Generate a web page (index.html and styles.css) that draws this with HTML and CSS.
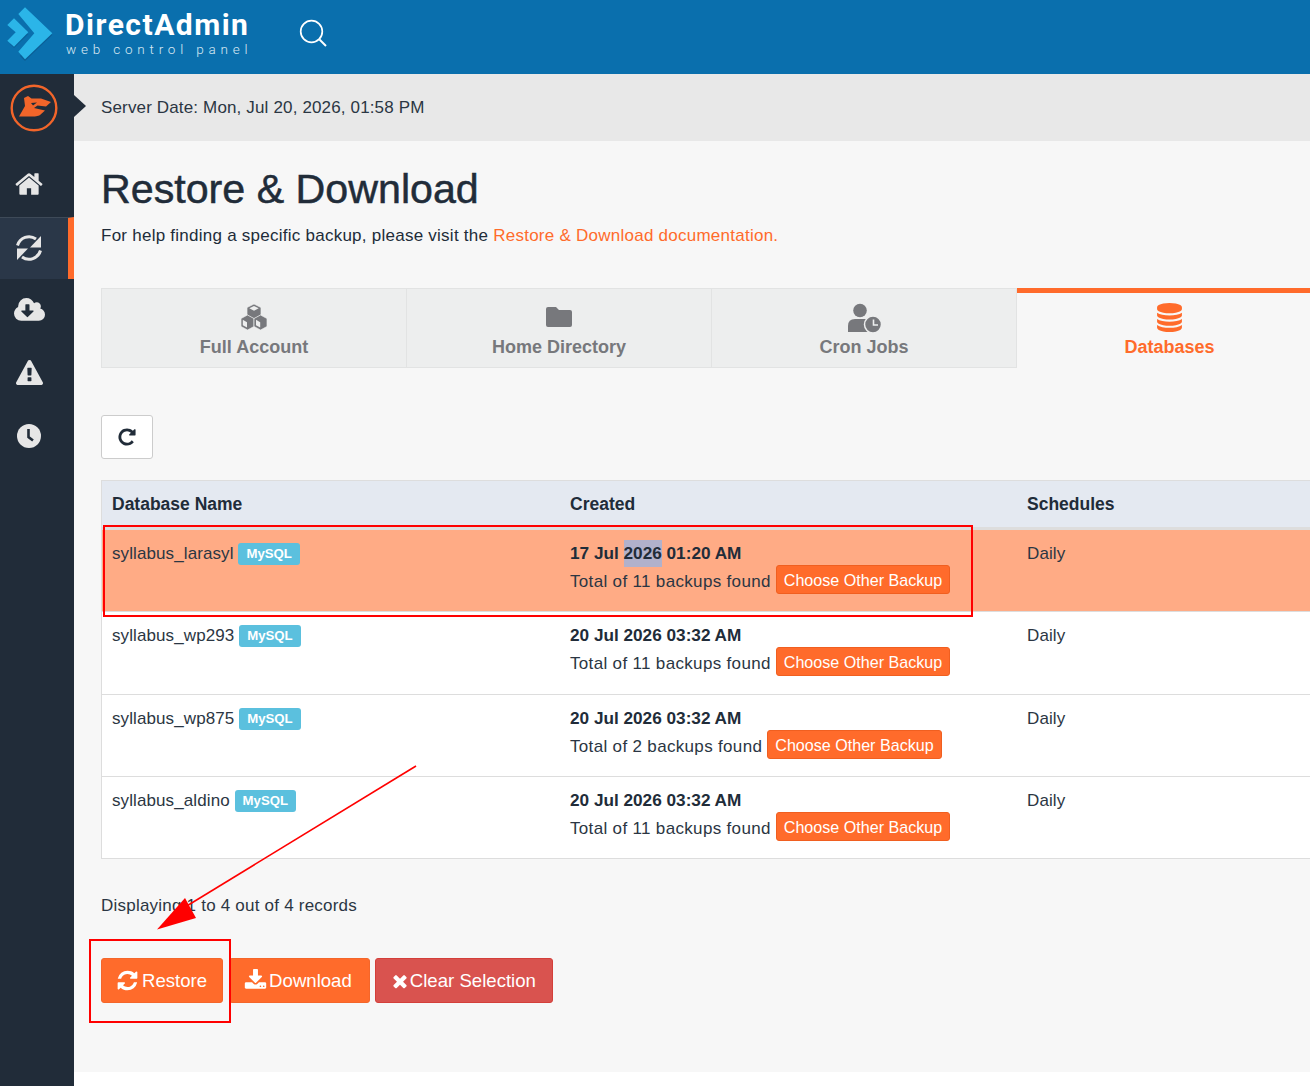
FILE: index.html
```html
<!DOCTYPE html>
<html lang="en">
<head>
<meta charset="utf-8">
<title>Restore &amp; Download</title>
<link rel="stylesheet" href="styles.css">
</head>
<body>
<div class="page">
  <header class="topbar">
    <svg class="da-mark" viewBox="0 0 54 62" aria-hidden="true">
      <path d="M25 9 L52.300 35 L25 61 L20 56 L38 35 L20 14Z" fill="#0a5f97"/>
      <path d="M25 7.300 L52.300 33.300 L25 59.300 L18.300 51.700 L34.300 33.300 L18.300 14Z" fill="#2bb5e8"/>
      <path d="M28.300 34 L14 48 L10 44 L18 34Z" fill="#0a5f97"/>
      <path d="M14 18.300 L28.300 32.300 L14 46.700 L7.300 40.700 L15.700 32.300 L7.300 25Z" fill="#2bb5e8"/>
    </svg>
    <div class="brand">
      <div class="brand-name">DirectAdmin</div>
      <div class="brand-sub">web control panel</div>
    </div>
    <svg class="search" viewBox="0 0 28 28" aria-hidden="true">
      <circle cx="12.500" cy="12.500" r="10.800" fill="none" stroke="#fff" stroke-width="1.700"/>
      <path d="M20.500 20.500 L27 27" stroke="#fff" stroke-width="1.900" fill="none"/>
    </svg>
  </header>

  <div class="body-row">
    <nav class="sidebar">
      <div class="mascot">
        <svg viewBox="0 0 60 60" class="mascot-svg" aria-hidden="true">
          <circle cx="30" cy="30" r="22.300" fill="none" stroke="#f2652a" stroke-width="2.400"/>
          <path d="M24 18 L27.500 20.500 H37 L47 24 L42 28.500 L33.500 27.500 L30 30 L41 32.500 L36 37 C33 39 28 38.500 15 38.500 L21 28 L20 20Z" fill="#f2652a"/>
          <path d="M27 25 L33 24.500 L29 27.500Z" fill="#212c39"/>
        </svg>
      </div>
      <a class="nav-item nav-home"><svg class="nav-icon icon-home" viewBox="0 0 1792 1792"><path d="M1472 992v480q0 26-19 45t-45 19h-384v-384h-256v384h-384q-26 0-45-19t-19-45v-480q0-1 .5-3t.5-3l575-474 575 474q1 2 1 6zm223-69l-62 74q-8 9-21 11h-3q-13 0-21-7l-692-577-692 577q-12 8-24 7-13-2-21-11l-62-74q-8-10-7-23.500t11-21.500l719-599q32-26 76-26t76 26l244 204v-195q0-14 9-23t23-9h192q14 0 23 9t9 23v408l219 182q10 8 11 21.500t-7 23.500z"/></svg></a>
      <a class="nav-item nav-active"><svg class="icon-sync" viewBox="0 0 40 40"><path d="M8.500 17.500 A12 12 0 0 1 27 11" fill="none" stroke="#e6e6e6" stroke-width="3"/><path d="M32 8 V19.500 H21Z" fill="#e6e6e6"/><path d="M31.500 22.500 A12 12 0 0 1 13 29" fill="none" stroke="#e6e6e6" stroke-width="3"/><path d="M8 32 V20.500 H19Z" fill="#e6e6e6"/></svg></a>
      <a class="nav-item"><svg class="nav-icon icon-cloud" viewBox="0 0 1920 1792"><path d="M1216 928q0-14-9-23t-23-9h-224v-352q0-13-9.500-22.500t-22.500-9.500h-192q-13 0-22.500 9.500t-9.500 22.500v352h-224q-13 0-22.500 9.500t-9.500 22.500q0 14 9 23l352 352q9 9 23 9t23-9l351-351q10-12 10-24zm704 224q0 159-112.500 271.500t-271.500 112.500h-1088q-185 0-316.500-131.500t-131.500-316.500q0-130 70-240t188-165q-2-30-2-43 0-212 150-362t362-150q156 0 285.500 87t188.500 231q71-62 166-62 106 0 181 75t75 181q0 76-41 138 130 31 213.500 135.500t83.500 238.500z"/></svg></a>
      <a class="nav-item nav-low"><svg class="nav-icon icon-warn" viewBox="0 0 1792 1792"><path d="M1024 1375v-190q0-14-9.500-23.500t-22.500-9.500h-192q-13 0-22.500 9.500t-9.500 23.500v190q0 14 9.500 23.500t22.500 9.500h192q13 0 22.500-9.500t9.500-23.500zm-2-374l18-459q0-12-10-19-13-11-24-11h-220q-11 0-24 11-10 7-10 21l17 457q0 10 10 16.500t24 6.500h185q14 0 23.500-6.500t10.500-16.500zm-14-934l768 1408q35 63-2 126-17 29-46.500 46t-63.500 17h-1536q-34 0-63.500-17t-46.500-46q-37-63-2-126l768-1408q17-31 47-49t65-18 65 18 47 49z"/></svg></a>
      <a class="nav-item nav-lower"><svg class="nav-icon icon-clock" viewBox="0 0 24 24"><circle cx="12" cy="12" r="12"/><path d="M11.500 5 V13 L16 16.500" fill="none" stroke="#212c39" stroke-width="2.600"/></svg></a>
    </nav>

    <main class="main">
      <div class="datebar">
        <svg class="datebar-tip" viewBox="0 0 12 22" aria-hidden="true"><path d="M0 0 L12 11 L0 22Z"/></svg>
        Server Date: Mon, Jul 20, 2026, 01:58 PM
      </div>
      <section class="content">
        <h1 class="title">Restore &amp; Download</h1>
        <p class="help">For help finding a specific backup, please visit the <a class="help-link">Restore &amp; Download documentation.</a></p>

        <div class="tabs">
          <div class="tab">
            <svg class="tab-icon" viewBox="0 0 28 26"><g fill="#77787c" stroke="#edeeee" stroke-width="0.700"><path d="M14 0 L21 3.500 V11 L14 15 L7 11 V3.500Z"/><path d="M7.500 11 L14 14.500 V22.500 L7.500 26 L1 22.500 V14.500Z"/><path d="M20.500 11 L27 14.500 V22.500 L20.500 26 L14 22.500 V14.500Z"/></g><g fill="#edeeee"><path d="M9.300 4.300 L14 6.800 L18.700 4.300 L14 2Z"/><path d="M2.800 15.800 L7 18.200 V23.500 L2.800 21.200Z"/><path d="M16 15.800 L20.200 18.200 V23.500 L16 21.200Z"/></g></svg>
            <span class="tab-label">Full Account</span>
          </div>
          <div class="tab">
            <svg class="tab-icon" viewBox="0 0 28 26"><path d="M3 3 H11 L14 6 H25 Q27 6 27 8 V21 Q27 23 25 23 H3 Q1 23 1 21 V5 Q1 3 3 3Z" fill="#77787c"/></svg>
            <span class="tab-label">Home Directory</span>
          </div>
          <div class="tab tab-third">
            <svg class="tab-icon tab-icon-user" viewBox="0 0 34 30"><circle cx="13" cy="7.500" r="6.800" fill="#77787c"/><path d="M1 29 V23 Q1 16 8 16 H18 Q24 16 25 20 V29Z" fill="#77787c"/><circle cx="26" cy="21.500" r="8.500" fill="#77787c" stroke="#edeeee" stroke-width="1.500"/><path d="M26.500 16.500 V22 H31" stroke="#edeeee" stroke-width="1.600" fill="none"/></svg>
            <span class="tab-label">Cron Jobs</span>
          </div>
          <div class="tab tab-active">
            <svg class="tab-icon tab-icon-db" viewBox="0 0 1536 1792"><path d="M768 768q237 0 443-43t325-127v170q0 69-103 128t-280 93.500-385 34.500-385-34.500-280-93.500-103-128v-170q119 84 325 127t443 43zm0 768q237 0 443-43t325-127v170q0 69-103 128t-280 93.500-385 34.500-385-34.500-280-93.500-103-128v-170q119 84 325 127t443 43zm0-384q237 0 443-43t325-127v170q0 69-103 128t-280 93.500-385 34.500-385-34.500-280-93.500-103-128v-170q119 84 325 127t443 43zm0-1152q208 0 385 34.500t280 93.500 103 128v128q0 69-103 128t-280 93.500-385 34.500-385-34.500-280-93.500-103-128v-128q0-69 103-128t280-93.500 385-34.500z" fill="#ff6b2b"/></svg>
            <span class="tab-label">Databases</span>
          </div>
        </div>

        <button class="refresh" type="button"><svg viewBox="0 0 1792 1792" class="refresh-icon"><path d="M1664 256v448q0 26-19 45t-45 19h-448q-42 0-59-40-17-39 14-69l138-138q-148-137-349-137-104 0-198.500 40.500t-163.500 109.500-109.500 163.500-40.500 198.500 40.500 198.500 109.500 163.500 163.500 109.500 198.500 40.500q119 0 225-52t179-147q7-10 23-12 15 0 25 9l137 138q9 8 9.500 20.500t-7.500 22.500q-109 132-264 204.500t-327 72.500q-156 0-298-61t-245-164-164-245-61-298 61-298 164-245 245-164 298-61q147 0 284.500 55.500t244.500 156.500l130-129q29-31 70-14 39 17 39 59z"/></svg></button>

        <table class="dbtable">
          <colgroup><col class="col-w"><col class="col-w"><col></colgroup>
          <thead>
            <tr><th>Database Name</th><th>Created</th><th>Schedules</th></tr>
          </thead>
          <tbody>
            <tr class="row-selected">
              <td>syllabus_larasyl <span class="badge">MySQL</span></td>
              <td><div class="created"><b>17 Jul <span class="selection">2026</span> 01:20 AM</b></div><div class="found">Total of 11 backups found <button class="btn-small" type="button">Choose Other Backup</button></div></td>
              <td>Daily</td>
            </tr>
            <tr>
              <td>syllabus_wp293 <span class="badge">MySQL</span></td>
              <td><div class="created"><b>20 Jul 2026 03:32 AM</b></div><div class="found">Total of 11 backups found <button class="btn-small" type="button">Choose Other Backup</button></div></td>
              <td>Daily</td>
            </tr>
            <tr>
              <td>syllabus_wp875 <span class="badge">MySQL</span></td>
              <td><div class="created"><b>20 Jul 2026 03:32 AM</b></div><div class="found">Total of 2 backups found <button class="btn-small" type="button">Choose Other Backup</button></div></td>
              <td>Daily</td>
            </tr>
            <tr>
              <td>syllabus_aldino <span class="badge">MySQL</span></td>
              <td><div class="created"><b>20 Jul 2026 03:32 AM</b></div><div class="found">Total of 11 backups found <button class="btn-small" type="button">Choose Other Backup</button></div></td>
              <td>Daily</td>
            </tr>
          </tbody>
        </table>

        <p class="records">Displaying 1 to 4 out of 4 records</p>

        <div class="actions">
          <button class="btn btn-orange btn-restore" type="button"><svg class="btn-icon" viewBox="0 0 1792 1792"><path d="M1639 1056q0 5-1 7-64 268-268 434.500t-478 166.500q-146 0-282.500-55t-243.500-157l-129 129q-19 19-45 19t-45-19-19-45v-448q0-26 19-45t45-19h448q26 0 45 19t19 45-19 45l-137 137q71 66 161 102t187 36q134 0 250-65t186-179q11-17 53-117 8-23 30-23h192q13 0 22.500 9.500t9.500 22.500zm25-800v448q0 26-19 45t-45 19h-448q-26 0-45-19t-19-45 19-45l138-138q-148-137-349-137-134 0-250 65t-186 179q-11 17-53 117-8 23-30 23h-199q-13 0-22.500-9.500t-9.500-22.500v-7q65-268 270-434.500t480-166.500q146 0 284 55.500t245 156.500l130-129q19-19 45-19t45 19 19 45z"/></svg>Restore</button>
          <button class="btn btn-orange btn-download" type="button"><svg class="btn-icon" viewBox="0 0 1792 1792"><path d="M1344 1344q0-26-19-45t-45-19-45 19-19 45 19 45 45 19 45-19 19-45zm256 0q0-26-19-45t-45-19-45 19-19 45 19 45 45 19 45-19 19-45zm128-224v320q0 40-28 68t-68 28h-1472q-40 0-68-28t-28-68v-320q0-40 28-68t68-28h465l135 136q58 56 136 56t136-56l136-136h464q40 0 68 28t28 68zm-325-569q17 41-14 70l-448 448q-18 19-45 19t-45-19l-448-448q-31-29-14-70 17-39 59-39h256v-448q0-26 19-45t45-19h256q26 0 45 19t19 45v448h256q42 0 59 39z"/></svg>Download</button>
          <button class="btn btn-red" type="button"><svg class="btn-icon btn-icon-x" viewBox="0 0 1792 1792"><path d="M1490 1322q0 40-28 68l-136 136q-28 28-68 28t-68-28l-294-294-294 294q-28 28-68 28t-68-28l-136-136q-28-28-28-68t28-68l294-294-294-294q-28-28-28-68t28-68l136-136q28-28 68-28t68 28l294 294 294-294q28-28 68-28t68 28l136 136q28 28 28 68t-28 68l-294 294 294 294q28 28 28 68z"/></svg>Clear Selection</button>
        </div>
      </section>
    </main>
  </div>

  <div class="mark mark-row"></div>
  <div class="mark mark-restore"></div>
  <svg class="mark-arrow" viewBox="0 0 1310 1086" aria-hidden="true">
    <path d="M416 766 L172 915" stroke="#f00" stroke-width="1.600" fill="none"/>
    <path d="M157 929.500 L185 898 L196 918Z" fill="#f00"/>
  </svg>
</div>
</body>
</html>
```
FILE: styles.css
```css
* { box-sizing: border-box; }
html, body { margin: 0; padding: 0; }
body {
  background: #fff;
  color: #212c39;
  font-family: "Liberation Sans", Arial, sans-serif;
  font-size: 16px;
  line-height: 1.4;
}
.page {
  position: relative;
  width: 1310px;
  height: 1086px;
  overflow: hidden;
  display: flex;
  flex-direction: column;
}

/* top bar */
.topbar {
  flex: 0 0 74px;
  background: #0a6fad;
  display: flex;
  align-items: flex-start;
}
.da-mark { width: 54px; height: 62px; margin: 0; flex: none; }
.brand { margin: 9px 0 0 11px; width: 186px; color: #fff; flex: none; }
.brand-name {
  font-family: Roboto, sans-serif;
  font-weight: 700;
  font-size: 30px;
  line-height: 32px;
  letter-spacing: 1.500px;
  white-space: nowrap;
}
.brand-sub {
  font-family: Roboto, sans-serif;
  font-weight: 300;
  font-size: 13.500px;
  line-height: 16px;
  letter-spacing: 4.800px;
  margin-left: 1px;
  white-space: nowrap;
  color: #d9e9f3;
}
.search { width: 28px; height: 28px; margin: 19px 0 0 48px; flex: none; }

.body-row { flex: 1; display: flex; min-height: 0; }

/* sidebar */
.sidebar { flex: 0 0 74px; background: #212c39; }
.mascot { height: 79px; padding: 4px 0 0 4px; }
.mascot-svg { width: 60px; height: 60px; display: block; }
.nav-item {
  height: 62px;
  display: flex;
  align-items: center;
  justify-content: center;
  padding-right: 16px;
  fill: #e6e6e6;
}
.nav-home { height: 64px; padding-bottom: 2px; }
.nav-low { padding-top: 2px; }
.nav-lower { padding-top: 3px; }
.nav-active {
  background: #2a3748;
  border-top: 1px solid #3e4a58;
  border-right: 6px solid #ff6b2b;
  padding-right: 10px;
  padding-bottom: 1px;
}
.nav-icon { display: block; }
.icon-home { width: 30px; height: 30px; }
.icon-sync { width: 40px; height: 40px; display: block; }
.icon-cloud { width: 31px; height: 29px; }
.icon-warn { width: 27px; height: 27px; }
.icon-clock { width: 24px; height: 24px; }

/* main */
.main { flex: 1; min-width: 0; display: flex; flex-direction: column; }
.datebar {
  position: relative;
  flex: 0 0 67px;
  background: #e8e8e8;
  padding-left: 27px;
  line-height: 67px;
  font-size: 17px;
  letter-spacing: 0.150px;
  color: #2b3643;
}
.datebar-tip { position: absolute; left: 0; top: 21px; width: 12px; height: 22px; fill: #212c39; }

.content {
  height: 931px;
  background: #f7f7f7;
  padding: 23px 0 0 27px;
}
.title {
  margin: 0;
  font-size: 41.200px;
  font-weight: 400;
  line-height: 50px;
  color: #212c39;
  -webkit-text-stroke: 0.5px #212c39;
}
.help { margin: 9px 0 0; font-size: 17px; letter-spacing: 0.250px; line-height: 26px; color: #212c39; }
.help-link { color: #ff6b2b; }

/* tabs */
.tabs {
  display: flex;
  margin-top: 39px;
  height: 80px;
}
.tab {
  flex: 0 0 305px;
  background: #edeeee;
  border: 1px solid #e2e3e3;
  border-right-width: 0;
  display: flex;
  flex-direction: column;
  align-items: center;
  padding-top: 15px;
}
.tab-third { flex-basis: 306px; border-right-width: 1px; }
.tab-active {
  background: transparent;
  border: 0;
  border-top: 5px solid #ff6b2b;
  padding-top: 10px;
}
.tab-icon { width: 28px; height: 26px; display: block; }
.tab-icon-user { width: 34px; height: 30px; margin-top: -1px; margin-bottom: -3px; }
.tab-icon-db { width: 25px; height: 29px; margin-bottom: -3px; }
.tab-label { margin-top: 5px; font-size: 18px; font-weight: 700; line-height: 24px; color: #77787c; }
.tab-active .tab-label { color: #ff6b2b; margin-top: 6px; }

.refresh {
  display: flex;
  align-items: center;
  justify-content: center;
  width: 52px;
  height: 44px;
  margin-top: 47px;
  padding: 0;
  background: #fff;
  border: 1px solid #ccc;
  border-radius: 3px;
}
.refresh-icon { width: 20px; height: 20px; fill: #212c39; }

/* table */
.dbtable {
  margin-top: 21px;
  width: 1209px;
  table-layout: fixed;
  border-collapse: separate;
  border-spacing: 0;
  font-size: 17px;
  border-left: 1px solid #ddd;
  border-top: 1px solid #ddd;
  background: #fff;
}
.col-w { width: 457px; }
.dbtable th {
  height: 49px;
  padding: 0 11px;
  text-align: left;
  font-weight: 700;
  font-size: 17.500px;
  background: #e4e9f1;
  border-bottom: 3px solid #ddd;
}
.dbtable td {
  height: 82px;
  padding: 13px 11px 0;
  vertical-align: top;
  border-bottom: 1px solid #ddd;
  line-height: 22px;
  color: #2b3643;
  letter-spacing: 0.100px;
}
.dbtable th:first-child, .dbtable td:first-child { padding-left: 10px; }
.dbtable td:nth-child(2) { padding-top: 12px; }
.dbtable tr:nth-child(2) td { height: 83px; }
.row-selected td { background: #ffab85; }
.created { color: #212c39; line-height: 22px; font-size: 17.200px; letter-spacing: 0; }
.created b { font-weight: 700; }
.selection { background: #b1b1cb; padding: 3px 0 4px; }
.found { line-height: 34px; margin-top: 1px; white-space: nowrap; letter-spacing: 0.330px; }
.badge {
  display: inline-block;
  background: #5bc0de;
  color: #fff;
  font-size: 13.200px;
  font-weight: 700;
  line-height: 22px;
  height: 22px;
  padding: 0 8px;
  border-radius: 3px;
  vertical-align: top;
  letter-spacing: 0;
}
.btn-small {
  display: inline-block;
  height: 29px;
  padding: 0 7px;
  font-family: inherit;
  font-size: 16.100px;
  line-height: 26px;
  letter-spacing: 0;
  color: #fff;
  background: #ff6b2b;
  border: 1px solid #f05f20;
  border-radius: 3px;
  vertical-align: top;
}

.records { margin: 35px 0 0; font-size: 17px; letter-spacing: 0.220px; line-height: 24px; color: #2b3643; }

.actions { display: flex; margin-top: 40px; }
.btn {
  display: flex;
  align-items: center;
  height: 45px;
  padding: 0 16px 0 14px;
  font-family: inherit;
  font-size: 18.600px;
  color: #fff;
  border-radius: 3px;
  fill: #fff;
  white-space: nowrap;
}
.btn-orange { background: #ff6b2b; border: 1px solid #f4662a; }
.btn-restore { padding-right: 15px; }
.btn-download { margin: 0 5px 0 6px; padding-right: 17px; }
.btn-red { background: #d9534f; border: 1px solid #d43f3a; }
.btn-icon { width: 23px; height: 23px; margin-right: 3px; flex: none; }
.btn-download .btn-icon { margin-right: 2px; }
.btn-icon-x { width: 20px; height: 20px; margin-right: 0; }

/* annotations drawn over the screenshot */
.mark { position: absolute; border: 2px solid #f00; pointer-events: none; }
.mark-row { left: 103px; top: 525px; width: 870px; height: 92px; }
.mark-restore { left: 89px; top: 939px; width: 142px; height: 84px; }
.mark-arrow { position: absolute; left: 0; top: 0; width: 1310px; height: 1086px; pointer-events: none; }
```
